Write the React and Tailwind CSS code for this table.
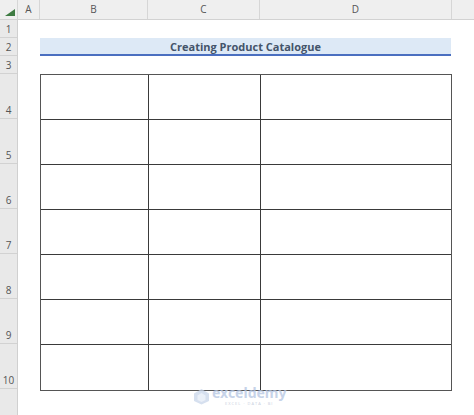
import React from "react";

const rowHeights = [18, 18, 18, 45, 45, 45, 45, 45, 45, 45];

export default function App() {
  return (
    <div
      className="relative w-[474px] h-[415px] overflow-hidden bg-white"
      style={{ fontFamily: '"Open Sans", "Noto Sans", sans-serif' }}
    >
      {/* column header */}
      <div className="flex h-[20px] bg-[#efefef] border-b border-[#d2d2d2] text-[10px] text-[#555]">
        <div className="relative w-[18px] border-r border-[#d6d6d6]">
          <svg className="absolute right-[2px] bottom-[3px]" width="10" height="7" viewBox="0 0 10 7">
            <polygon points="10,0 10,7 0,7" fill="#3e7b42" />
          </svg>
        </div>
        <div className="w-[22px] flex items-center justify-center border-r border-[#d6d6d6]">A</div>
        <div className="w-[108px] flex items-center justify-center border-r border-[#d6d6d6]">B</div>
        <div className="w-[112px] flex items-center justify-center border-r border-[#d6d6d6]">C</div>
        <div className="w-[192px] flex items-center justify-center border-r border-[#d6d6d6]">D</div>
        <div className="flex-1" />
      </div>

      <div className="flex">
        {/* row headers */}
        <div className="w-[18px] bg-[#e9e9e9] border-r border-[#d0d0d0] h-[395px] flex flex-col text-[10px] text-[#555]">
          {rowHeights.map((h, i) => (
            <div
              key={i}
              className="flex items-end justify-center pb-[1px] border-b border-[#d2d2d2] leading-none"
              style={{ height: h }}
            >
              <span className="pb-[2px]">{i + 1}</span>
            </div>
          ))}
        </div>

        {/* sheet area */}
        <div className="flex-1 flex flex-col">
          <div className="h-[18px]" />
          <div className="h-[18px] pl-[22px]">
            <div className="w-[411px] h-[18px] bg-[#dde9f6] border-b-2 border-[#4a6fc0] flex items-center justify-center">
              <span className="text-[11px] font-bold text-[#44546a] leading-none pt-[1px]">
                Creating Product Catalogue
              </span>
            </div>
          </div>
          <div className="h-[18px]" />
          <div className="pl-[22px]">
            <div className="w-[412px] border-[1.5px] border-[#555] flex flex-col">
              {Array.from({ length: 7 }).map((_, r) => (
                <div
                  key={r}
                  className={`flex h-[45px] ${r < 6 ? "border-b border-[#3a3a3a]" : ""}`}
                >
                  <div className="w-[108px] border-r border-[#3a3a3a]" />
                  <div className="w-[112px] border-r border-[#3a3a3a]" />
                  <div className="flex-1" />
                </div>
              ))}
            </div>
          </div>
        </div>
      </div>

      {/* watermark */}
      <div className="absolute left-[193px] top-[386px] flex items-center gap-[2px] opacity-75">
        <svg width="17" height="17" viewBox="0 0 17 17">
          <polygon points="8.5,1 16,5.5 16,13 8.5,16.5 1,13 1,5.5" fill="#c9d6ea" />
          <polygon points="8.5,5 12.5,7.5 12.5,12 8.5,14 4.5,12 4.5,7.5" fill="#e4ebf6" />
        </svg>
        <div className="flex flex-col items-center">
          <span
            className="block h-[13px] text-[14px] leading-[13px] font-bold text-[#b4c5e2]"
            style={{ fontFamily: '"Noto Sans", sans-serif' }}
          >
            exceldemy
          </span>
          <span className="block h-[5px] text-[4px] leading-[5px] text-[#b4c0d4] tracking-[1px] mt-[2px]">
            EXCEL · DATA · BI
          </span>
        </div>
      </div>
    </div>
  );
}
